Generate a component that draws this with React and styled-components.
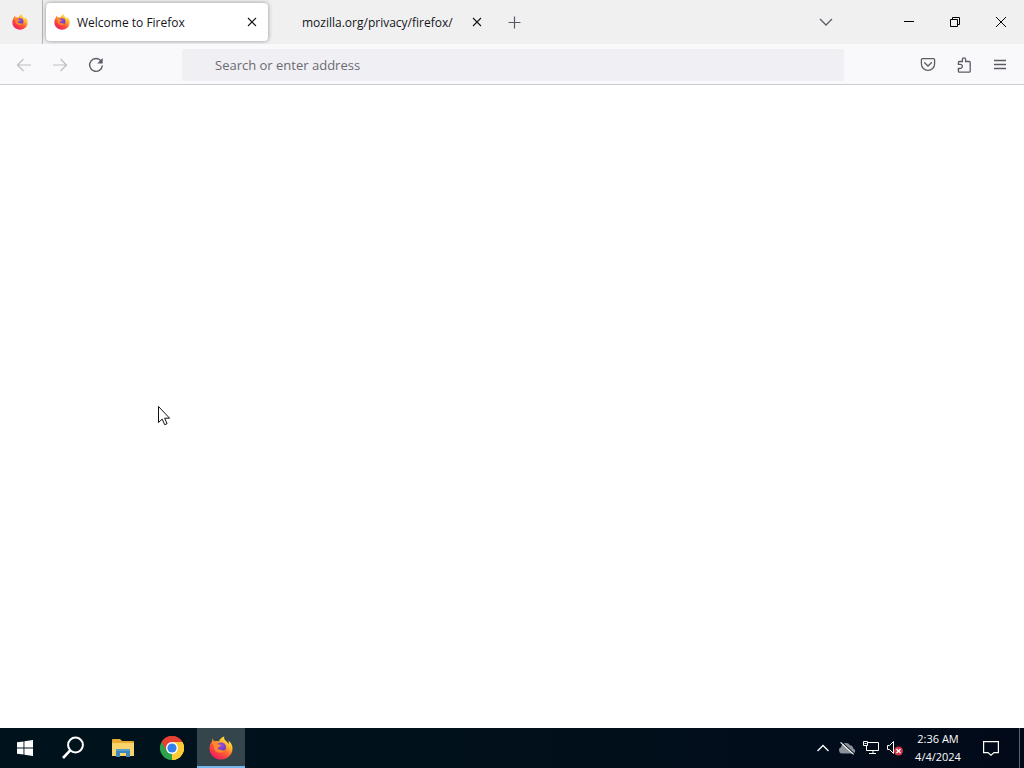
import React from "react";
import styled, { createGlobalStyle } from "styled-components";

const GlobalStyle = createGlobalStyle`
  * { box-sizing: border-box; }
  body {
    margin: 0;
    background: #fff;
    font-family: "Open Sans", "Noto Sans", sans-serif;
    font-size: 12px;
  }
  button { font: inherit; color: inherit; }
`;

const Desktop = styled.div`
  display: flex;
  flex-direction: column;
  min-height: 100vh;
`;

const TabStrip = styled.header`
  display: flex;
  height: 44px;
  background: #f0f0f0;
  color: #15141a;
`;

const IconButton = styled.button`
  display: flex;
  align-items: center;
  justify-content: center;
  flex: none;
  width: ${(p) => p.$width || 36}px;
  height: ${(p) => p.$height || 32}px;
  padding: 0;
  border: 0;
  background: transparent;
  color: ${(p) => p.$color || "#5b5b66"};
`;

const PinnedView = styled.button`
  display: flex;
  align-items: center;
  justify-content: center;
  width: 43px;
  padding: 0 2px 0 0;
  border: 0;
  border-right: 1px solid #b4b4b6;
  background: transparent;
`;

const Tabs = styled.nav`
  display: flex;
  gap: 3px;
  padding: 3px;
`;

const Tab = styled.div`
  display: flex;
  align-items: center;
  width: 222px;
  height: 38px;
  padding: 0 4px 0 ${(p) => (p.$active ? 8 : 31)}px;
  border-radius: 4px;
  background: ${(p) => (p.$active ? "#fff" : "transparent")};
  box-shadow: ${(p) => (p.$active ? "0 0 4px rgba(90, 90, 100, 0.65)" : "none")};
`;

const TabLabel = styled.button`
  display: flex;
  align-items: center;
  flex: 1;
  gap: 7px;
  padding: 0;
  border: 0;
  background: transparent;
  white-space: nowrap;
  line-height: 16px;
`;

const TabTitle = styled.span`
  padding-top: 2px;
`;

const Spacer = styled.div`
  flex: 1;
`;

const WindowControls = styled.div`
  display: flex;
  margin-left: 42px;
`;

const Toolbar = styled.div`
  display: flex;
  align-items: center;
  height: 41px;
  padding: 1px 6px 0;
  border-bottom: 1px solid #ccccd1;
  background: #f9f9fb;
`;

const AddressForm = styled.form`
  flex: 1;
  margin: 0 66px 0 68px;
`;

const AddressInput = styled.input`
  display: block;
  width: 100%;
  height: 32px;
  padding: 0 33px;
  border: 0;
  border-radius: 2px;
  outline: 0;
  background: #f0f0f4;
  font: 13px "Open Sans", "Noto Sans", sans-serif;
  &::placeholder { color: #6b6a73; opacity: 1; }
`;

const Page = styled.main`
  flex: 1;
  background: #fff;
`;

const Taskbar = styled.footer`
  display: flex;
  height: 40px;
  background: linear-gradient(90deg, #00131c, #01101b 50%, #020a1a);
  color: #fff;
`;

const Launchers = styled.div`
  display: flex;
  gap: 1px;
  padding-left: 1px;
`;

const TaskButton = styled.button`
  display: flex;
  align-items: center;
  justify-content: center;
  width: 48px;
  height: 40px;
  padding: 0;
  border: 0;
  background: ${(p) => (p.$active ? "#34454c" : "transparent")};
  box-shadow: ${(p) => (p.$active ? "inset 0 -2px #76b9ed" : "none")};
  color: #fff;
`;

const Tray = styled.div`
  display: flex;
  align-items: center;
`;

const Clock = styled.button`
  width: 62px;
  padding: 0;
  border: 0;
  background: transparent;
  font-size: 11px;
  line-height: 18px;
  color: #fff;
  text-align: center;
  white-space: nowrap;
`;

const ShowDesktop = styled.button`
  width: 5px;
  height: 40px;
  margin-left: 6px;
  padding: 0;
  border: 0;
  border-left: 1px solid #59616d;
  background: transparent;
`;

const Pointer = styled.svg`
  position: absolute;
  left: 157px;
  top: 405px;
  pointer-events: none;
`;

function Glyph({ size = 16, width = 1.2, children }) {
  return (
    <svg
      width={size}
      height={size}
      viewBox={`0 0 ${size} ${size}`}
      fill="none"
      stroke="currentColor"
      strokeWidth={width}
      aria-hidden="true"
    >
      {children}
    </svg>
  );
}

function FirefoxLogo({ size, id }) {
  return (
    <svg width={size} height={size} viewBox="0 0 24 24" aria-hidden="true">
      <defs>
        <linearGradient id={`${id}-body`} x1="0.85" y1="0.05" x2="0.2" y2="0.95">
          <stop offset="0" stopColor="#fff04a" />
          <stop offset="0.3" stopColor="#ffb52c" />
          <stop offset="0.58" stopColor="#ff5a35" />
          <stop offset="1" stopColor="#f0195f" />
        </linearGradient>
        <radialGradient id={`${id}-globe`} cx="0.5" cy="0.3" r="0.7">
          <stop offset="0" stopColor="#9a50e8" />
          <stop offset="1" stopColor="#6038b4" />
        </radialGradient>
      </defs>
      <path
        fill={`url(#${id}-body)`}
        d="M15.2 0.5C14.7 2.5 15.7 4 17.5 5.5C18.6 6.4 19.2 7.2 19.6 8.1C20 6.8 19.8 5.6 19.3 4.6C22.2 6.5 23.7 9.6 23.5 13C23.2 19 18.2 23.5 12 23.5C5.6 23.5 .5 18.6 .5 12.4C.5 9.7 1.5 7.2 3.1 5.2C3 4.2 3.2 3.3 3.7 2.4C4.1 3.6 4.9 4.7 6 5.4C7.2 5 8.5 5 9.7 5.4C10.7 3.1 12.5 1.3 15.2 .5Z"
      />
      <circle cx="12.2" cy="11.2" r="4.8" fill={`url(#${id}-globe)`} />
      <path
        fill="#ff8a2d"
        d="M2.6 7.1C4.4 4.9 7.5 4.6 9.4 6.3C8.8 6.5 8.4 7 8.4 7.7C8.9 8.5 10.4 8.8 12 8.9C11.8 10.2 10.1 10.6 9.4 11.3C8.8 12 8.9 12.8 8.5 13.4C9.7 13.1 10.8 13.4 12.1 14C13.8 14.8 15.4 14.3 16.2 13.4C15.7 15.6 13.5 17 10.9 16.6C7.3 16.1 5 14.4 5.1 11.4C5.1 9.1 4 8.1 2.6 7.1Z"
      />
    </svg>
  );
}

const CloseGlyph = () => (
  <Glyph size={10} width={1.1}><path d="M1 1l8 8M9 1L1 9" /></Glyph>
);

export default function App() {
  return (
    <>
      <GlobalStyle />
      <Desktop>
        <TabStrip>
          <PinnedView aria-label="Firefox View"><FirefoxLogo size={16} id="view" /></PinnedView>
          <Tabs aria-label="Tabs">
            <Tab $active>
              <TabLabel><FirefoxLogo size={16} id="tab" /><TabTitle>Welcome to Firefox</TabTitle></TabLabel>
              <IconButton $width={24} $height={24} $color="#15141a" aria-label="Close Welcome to Firefox"><CloseGlyph /></IconButton>
            </Tab>
            <Tab>
              <TabLabel><TabTitle>mozilla.org/privacy/firefox/</TabTitle></TabLabel>
              <IconButton $width={24} $height={24} $color="#15141a" aria-label="Close mozilla.org"><CloseGlyph /></IconButton>
            </Tab>
            <IconButton $height={38} aria-label="New tab">
              <Glyph size={13}><path d="M6.5 .5v12M.5 6.5h12" /></Glyph>
            </IconButton>
          </Tabs>
          <Spacer />
          <IconButton $height={44} aria-label="List all tabs">
            <Glyph size={14} width={1.3}><path d="M1 4l6 6 6-6" /></Glyph>
          </IconButton>
          <WindowControls>
            <IconButton $width={46} $height={44} $color="#000" aria-label="Minimize">
              <Glyph size={10} width={1}><path d="M0 4.5h10" /></Glyph>
            </IconButton>
            <IconButton $width={46} $height={44} $color="#000" aria-label="Restore">
              <Glyph size={10} width={1}><path d="M.5 2.5h7v7h-7zM2.5 2.5v-2h7v7h-2" /></Glyph>
            </IconButton>
            <IconButton $width={46} $height={44} $color="#000" aria-label="Close window">
              <Glyph size={10} width={1}><path d="M0 0l10 10M10 0L0 10" /></Glyph>
            </IconButton>
          </WindowControls>
        </TabStrip>

        <Toolbar>
          <IconButton $color="#bdbdc2" aria-label="Back">
            <Glyph><path d="M15 8H1.5M7.5 2L1.5 8l6 6" /></Glyph>
          </IconButton>
          <IconButton $color="#bdbdc2" aria-label="Forward">
            <Glyph><path d="M1 8h13.5M8.5 2l6 6-6 6" /></Glyph>
          </IconButton>
          <IconButton aria-label="Reload">
            <Glyph width={1.4}>
              <path d="M13.1 4A6.4 6.4 0 1 0 14.4 8.5" />
              <path d="M14.7 1v5.4H9.3z" fill="currentColor" stroke="none" />
            </Glyph>
          </IconButton>
          <AddressForm>
            <AddressInput aria-label="Address" placeholder="Search or enter address" />
          </AddressForm>
          <IconButton aria-label="Save to Pocket">
            <Glyph width={1.3}>
              <path d="M2.6 1.6h10.8a1.2 1.2 0 0 1 1.2 1.2v4a6.6 6.6 0 0 1-13.2 0v-4a1.2 1.2 0 0 1 1.2-1.2z" />
              <path d="M4.6 5.8L8 9l3.4-3.2" strokeLinecap="round" />
            </Glyph>
          </IconButton>
          <IconButton aria-label="Extensions">
            <Glyph width={1.3}>
              <path d="M2.4 7.3V5.5a1 1 0 0 1 1-1h3V2.4a1.6 1.6 0 0 1 3.2 0v2.1h3.6a1 1 0 0 1 1 1v8.7a1 1 0 0 1-1 1H3.4a1 1 0 0 1-1-1v-2.7h1.8a2.1 2.1 0 0 0 0-4.2z" />
            </Glyph>
          </IconButton>
          <IconButton aria-label="Application menu">
            <Glyph size={12} width={1.3}><path d="M0 1.5h12M0 5.5h12M0 9.5h12" /></Glyph>
          </IconButton>
        </Toolbar>

        <Page />

        <Taskbar>
          <Launchers>
            <TaskButton aria-label="Start">
              <svg width="16" height="16" viewBox="0 0 16 16" fill="#fff" aria-hidden="true">
                <path d="M0 2.3l6.5-.9v6.1H0zM7.4 1.2L16 0v7.5H7.4zM0 8.5h6.5v6.1L0 13.7zM7.4 8.5H16V16l-8.6-1.2z" />
              </svg>
            </TaskButton>
            <TaskButton aria-label="Search">
              <Glyph size={24} width={2}><circle cx="13.5" cy="9" r="7.4" /><path d="M8.2 14.4L1 22" strokeWidth="2.6" /></Glyph>
            </TaskButton>
            <TaskButton aria-label="File Explorer">
              <svg width="22" height="20" viewBox="0 0 22 20" aria-hidden="true">
                <path d="M0 2a1 1 0 0 1 1-1h7l2 2h11a1 1 0 0 1 1 1v14H0z" fill="#e9ab32" />
                <path d="M0 5h22v13H0z" fill="#f9d36b" />
                <path d="M4 19v-8h14v8h-4v-4H8v4z" fill="#3d87bd" />
                <path d="M4 11h14v2H4z" fill="#529fce" />
              </svg>
            </TaskButton>
            <TaskButton aria-label="Google Chrome">
              <svg width="24" height="24" viewBox="0 0 24 24" aria-hidden="true">
                <path d="M12 12L1.6 6A12 12 0 0 1 22.4 6z" fill="#e74133" />
                <path d="M12 12L22.4 6A12 12 0 0 1 12 24z" fill="#fdcb34" />
                <path d="M12 12v12A12 12 0 0 1 1.6 6z" fill="#2ba24c" />
                <path d="M12 6h10.4A12 12 0 0 1 12 24l5.2-9z" fill="#fdcb34" />
                <path d="M1.6 6A12 12 0 0 1 22.4 6H12l-5.2 9z" fill="#e74133" />
                <circle cx="12" cy="12" r="6" fill="#fff" />
                <circle cx="12" cy="12" r="4.6" fill="#3380ed" />
              </svg>
            </TaskButton>
            <TaskButton $active aria-label="Firefox"><FirefoxLogo size={24} id="task" /></TaskButton>
          </Launchers>
          <Spacer />
          <Tray>
            <IconButton $width={24} $height={40} $color="#fff" aria-label="Show hidden icons">
              <Glyph size={14} width={1.3}><path d="M1.5 10L7 4.5 12.5 10" /></Glyph>
            </IconButton>
            <IconButton $width={24} $height={40} $color="#fff" aria-label="OneDrive, not signed in">
              <svg width="18" height="16" viewBox="0 0 18 16" aria-hidden="true">
                <path d="M3.8 13.5a3.3 3.3 0 0 1-.6-6.4A4.8 4.8 0 0 1 12 5.2a3.7 3.7 0 0 1 3.3 3.2 2.6 2.6 0 0 1-.3 5.1z" fill="#8b9099" />
                <path d="M3.4 1.9l13 12" stroke="#020d1b" strokeWidth="1.2" />
                <path d="M2.6 2.4l13 12" stroke="#fff" strokeWidth="1.2" />
              </svg>
            </IconButton>
            <IconButton $width={24} $height={40} $color="#fff" aria-label="Network">
              <Glyph size={16} width={1}><path d="M4.5 2.5h11v8h-12V6M10 10.5v3M6 13.5h7M.5 1.5h4v4h-4zM1.5 3.5h2" /></Glyph>
            </IconButton>
            <IconButton $width={24} $height={40} $color="#fff" aria-label="Volume unavailable">
              <svg width="16" height="16" viewBox="0 0 16 16" fill="none" aria-hidden="true">
                <path d="M.5 5.5h2l4-4v12l-4-4h-2z" stroke="#fff" />
                <circle cx="11.5" cy="11" r="4.5" fill="#cf3545" />
                <path d="M9.5 9l4 4m0-4l-4 4" stroke="#fff" strokeWidth="1.2" />
              </svg>
            </IconButton>
            <Clock aria-label="Date and time"><div>2:36 AM</div><div>4/4/2024</div></Clock>
            <IconButton $width={44} $height={40} $color="#fff" aria-label="Notifications">
              <Glyph size={16} width={1.2}><path d="M.6 1.6h14.8v11H11L8 15.2l-3-2.6H.6z" /></Glyph>
            </IconButton>
            <ShowDesktop aria-label="Show desktop" />
          </Tray>
        </Taskbar>
      </Desktop>
      <Pointer width="14" height="22" viewBox="0 0 14 22" aria-hidden="true">
        <path d="M1.5 1.5v16l3.7-3.4 2.5 5.6 2.4-1-2.5-5.5h5z" fill="#fff" stroke="#111" />
      </Pointer>
    </>
  );
}
